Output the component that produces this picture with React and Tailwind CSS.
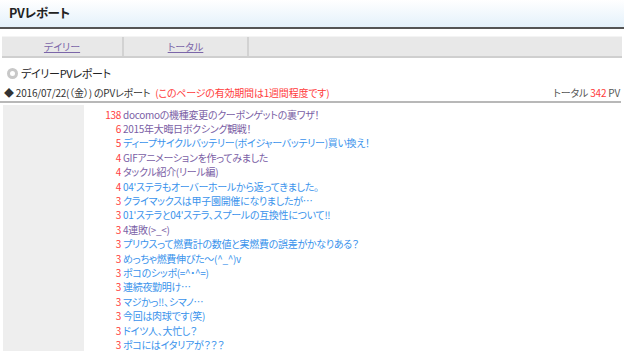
import React from "react";

const rows = [
  ["138", "docomoの機種変更のクーポンゲットの裏ワザ！", "v"],
  ["6", "2015年大晦日ボクシング観戦！", "v"],
  ["5", "ディープサイクルバッテリー(ボイジャーバッテリー)買い換え！", "b"],
  ["4", "GIFアニメーションを作ってみました", "v"],
  ["4", "タックル紹介(リール編)", "v"],
  ["4", "04'ステラもオーバーホールから返ってきました。", "b"],
  ["3", "クライマックスは甲子園開催になりましたが…", "b"],
  ["3", "01'ステラと04'ステラ、スプールの互換性について!!", "b"],
  ["3", "4連敗(>_<)", "v"],
  ["3", "プリウスって燃費計の数値と実燃費の誤差がかなりある？", "b"],
  ["3", "めっちゃ燃費伸びた～(^_^)v", "b"],
  ["3", "ポコのシッポ(=^・^=)", "b"],
  ["3", "連続夜勤明け…", "b"],
  ["3", "マジかっ!!、シマノ…", "b"],
  ["3", "今回は肉球です(笑)", "b"],
  ["3", "ドイツ人、大忙し？", "b"],
  ["3", "ポコにはイタリアが？？？", "b"],
];

export default function App() {
  return (
    <div className="w-[624px] h-[351px] overflow-hidden bg-white text-[#333] font-['Noto_Sans_CJK_JP','Noto_Sans',sans-serif] [font-feature-settings:'palt']">
      <div className="h-[29px] bg-linear-to-b from-white to-[#e4f1fb] border-b-2 border-[#555] px-[9px] flex items-center text-[12.5px] font-bold tracking-[-0.3px] text-[#222]">
        PVレポート
      </div>
      <div className="mt-[7px] mx-[2px] h-[22px] bg-[#e8e8e8] border-t border-[#f4f4f4] border-b-2 border-b-[#cfcfcf] flex text-[10px]">
        <div className="w-[122px] border-r-2 border-[#d2d2d2] flex items-center justify-center">
          <span className="underline text-[#7b66a8]">デイリー</span>
        </div>
        <div className="w-[125px] border-r-2 border-[#d2d2d2] flex items-center justify-center">
          <span className="underline text-[#7b66a8]">トータル</span>
        </div>
      </div>
      <div className="mt-[4px] h-[22px] flex items-center pl-[7px] text-[11px] tracking-[-0.3px] text-[#222]">
        <span className="w-[11px] h-[11px] rounded-full border-[3px] border-[#c8c8c8] bg-white mr-[3px]"></span>
        デイリーPVレポート
      </div>
      <div className="h-[17px] flex items-center pl-[4px] pr-[4px] text-[10px] tracking-[-0.2px] text-[#333]">
        <span>◆ 2016/07/22(（金）) のPVレポート</span>
        <span className="ml-[5px] text-[#ff3b3b]">(このページの有効期間は1週間程度です)</span>
        <span className="ml-auto text-[#555]">
          トータル <span className="text-[#ff3b3b]">342</span> PV
        </span>
      </div>
      <div className="mr-[3px] border-t-2 border-[#b8b8b8]"></div>
      <div className="mt-[2px] flex">
        <div className="ml-[3px] w-[81px] h-[260px] bg-[#eeeeee]"></div>
        <div className="pt-[2px] flex flex-col text-[10px] tracking-[-0.3px]">
          {rows.map(([n, t, c], i) => (
            <div key={i} className="h-[14.4px] flex items-center whitespace-nowrap">
              <span className="w-[37px] text-right text-[#ff4040]">{n}</span>
              <span className={"ml-[2px] " + (c === "v" ? "text-[#7a5ea5]" : "text-[#3a93ec]")}>{t}</span>
            </div>
          ))}
        </div>
      </div>
    </div>
  );
}
